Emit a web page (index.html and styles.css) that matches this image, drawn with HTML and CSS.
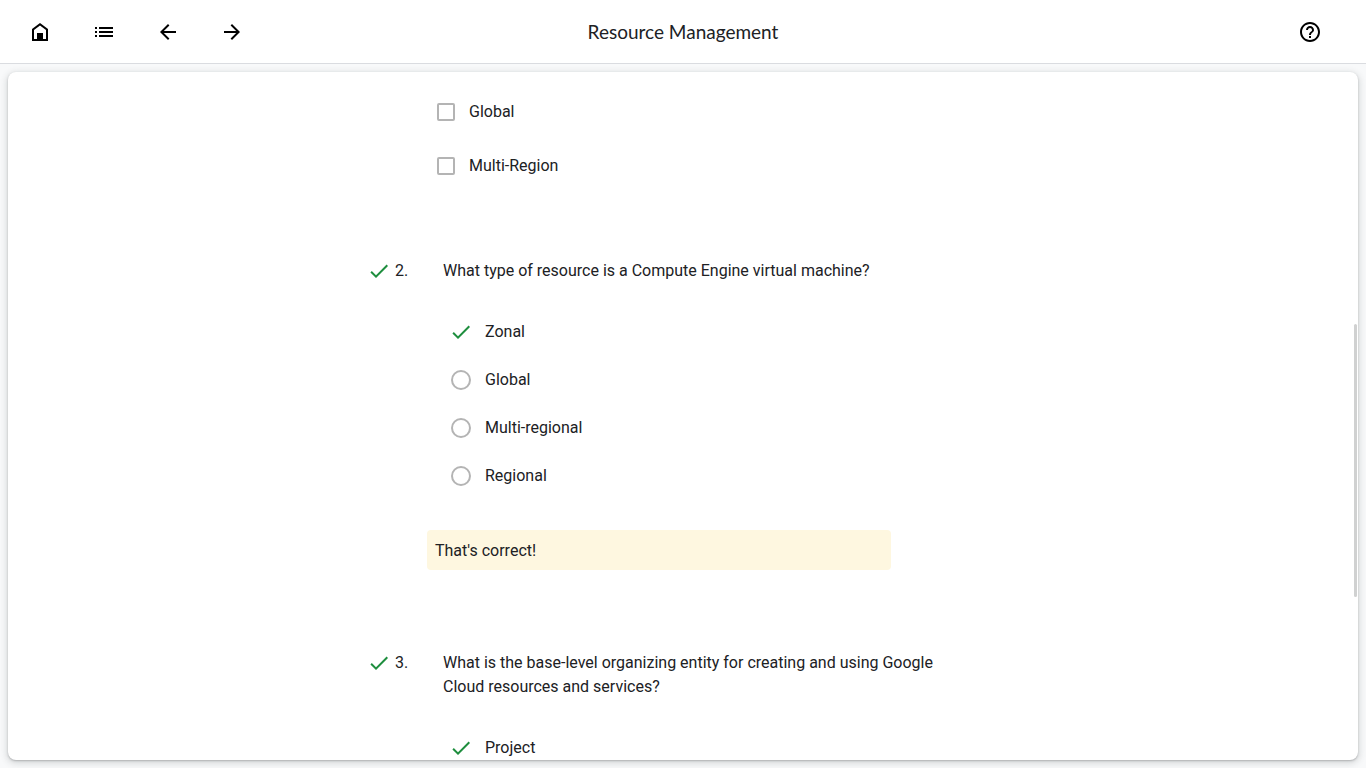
FILE: index.html
```html
<!DOCTYPE html>
<html lang="en">
<head>
<meta charset="utf-8">
<title>Resource Management</title>
<link rel="stylesheet" href="styles.css">
</head>
<body>
<svg class="defs" aria-hidden="true">
  <symbol id="check" viewBox="0 0 24 24"><path d="M9 16.170 4.830 12l-1.420 1.410L9 19 21 7l-1.410-1.410z"/></symbol>
</svg>
<header class="topbar">
  <nav class="tools" aria-label="Course">
    <button class="icon-button" type="button" aria-label="Home"><svg viewBox="0 0 24 24"><path d="M6 19h3v-6h6v6h3v-9l-6-4.500L6 10v9zm-2 2V9l8-6 8 6v12z"/><path d="M9 13h6v7H9z"/></svg></button>
    <button class="icon-button" type="button" aria-label="Outline"><svg viewBox="0 0 24 24"><path d="M3 7h2v2H3zM7 7h14v2H7zM3 11h2v2H3zM7 11h14v2H7zM3 15h2v2H3zM7 15h14v2H7z"/></svg></button>
    <button class="icon-button" type="button" aria-label="Previous"><svg viewBox="0 0 24 24"><path d="M20 11H7.830l5.590-5.590L12 4l-8 8 8 8 1.410-1.410L7.830 13H20z"/></svg></button>
    <button class="icon-button" type="button" aria-label="Next"><svg viewBox="0 0 24 24"><path d="m12 4-1.410 1.410L16.170 11H4v2h12.170l-5.580 5.590L12 20l8-8z"/></svg></button>
  </nav>
  <h1 class="title">Resource Management</h1>
  <div class="help">
    <button class="icon-button" type="button" aria-label="Help"><svg viewBox="0 0 24 24"><path d="M11 18h2v-2h-2v2zm1-16C6.480 2 2 6.480 2 12s4.480 10 10 10 10-4.480 10-10S17.520 2 12 2zm0 18c-4.410 0-8-3.590-8-8s3.590-8 8-8 8 3.590 8 8-3.590 8-8 8zm0-14c-2.210 0-4 1.790-4 4h2c0-1.100.9-2 2-2s2 .9 2 2c0 2-3 1.750-3 5h2c0-2.250 3-2.500 3-5 0-2.210-1.790-4-4-4z"/></svg></button>
  </div>
</header>
<main class="card">
  <form class="quiz">
    <div class="checkboxes">
      <label class="check-row"><input class="box" type="checkbox">Global</label>
      <label class="check-row"><input class="box" type="checkbox">Multi-Region</label>
    </div>
    <section class="question">
      <div class="prompt">
        <svg class="mark"><use href="#check"/></svg>
        <span class="number">2.</span>
        <p class="text">What type of resource is a Compute Engine virtual machine?</p>
      </div>
      <div class="options">
        <label class="option"><span class="control"><input class="radio" type="radio" name="q2" checked><svg class="tick"><use href="#check"/></svg></span>Zonal</label>
        <label class="option"><span class="control"><input class="radio" type="radio" name="q2"></span>Global</label>
        <label class="option"><span class="control"><input class="radio" type="radio" name="q2"></span>Multi-regional</label>
        <label class="option"><span class="control"><input class="radio" type="radio" name="q2"></span>Regional</label>
      </div>
      <p class="feedback">That's correct!</p>
    </section>
    <section class="question">
      <div class="prompt">
        <svg class="mark"><use href="#check"/></svg>
        <span class="number">3.</span>
        <p class="text">What is the base-level organizing entity for creating and using Google Cloud resources and services?</p>
      </div>
      <div class="options">
        <label class="option"><span class="control"><input class="radio" type="radio" name="q3" checked><svg class="tick"><use href="#check"/></svg></span>Project</label>
      </div>
    </section>
  </form>
  <div class="thumb"></div>
</main>
</body>
</html>
```
FILE: styles.css
```css
* { box-sizing: border-box; }

body {
  display: flex;
  flex-direction: column;
  height: 100vh;
  margin: 0;
  overflow: hidden;
  background: #f8f9fa;
  color: #202124;
  font: 16px/24px Roboto, sans-serif;
}

h1, p { margin: 0; }

.defs { display: none; }

.topbar {
  display: grid;
  grid-template-columns: 1fr auto 1fr;
  align-items: center;
  flex: none;
  height: 64px;
  padding: 0 32px 0 16px;
  background: #fff;
  border-bottom: 1px solid #dadce0;
}

.tools { display: flex; gap: 16px; }

.icon-button {
  display: grid;
  place-items: center;
  width: 48px;
  height: 48px;
  padding: 0;
  border: 0;
  background: none;
}

.icon-button svg { width: 24px; height: 24px; }

.title {
  margin-left: 16px;
  font: 400 19px/24px Lato, sans-serif;
}

.help { justify-self: end; }

.card {
  position: relative;
  flex: 1;
  min-height: 0;
  margin: 8px;
  overflow: hidden;
  background: #fff;
  border-radius: 8px;
  box-shadow: 0 1px 2px rgba(60, 64, 67, .3), 0 2px 6px 2px rgba(60, 64, 67, .15);
}

.quiz {
  max-width: 632px;
  margin: 0 auto;
  padding-top: 13px;
}

.checkboxes { padding-left: 70px; }

.check-row {
  display: flex;
  align-items: center;
  gap: 14px;
  height: 54px;
}

.box {
  appearance: none;
  width: 18px;
  height: 18px;
  margin: 0;
  border: 2px solid #b4b4b4;
  border-radius: 2px;
}

.question { padding-top: 81px; }

.checkboxes + .question { padding-top: 66px; }

.prompt { display: flex; }

.mark, .tick {
  flex: none;
  width: 24px;
  height: 24px;
  fill: #1e8e3e;
}

.mark { margin-right: 4px; }

.number { flex: none; width: 48px; }

.text { max-width: 512px; }

.options { padding: 25px 0 0 84px; }

.option {
  display: flex;
  align-items: center;
  gap: 14px;
  height: 48px;
}

.control {
  position: relative;
  display: flex;
  width: 20px;
  height: 20px;
}

.radio {
  appearance: none;
  width: 20px;
  height: 20px;
  margin: 0;
  border: 2px solid #b4b4b4;
  border-radius: 50%;
}

.radio:checked { opacity: 0; }

.tick { position: absolute; inset: -2px; }

.feedback {
  width: 464px;
  margin: 30px 0 0 60px;
  padding: 9px 8px 7px;
  background: #fef7e0;
  border-radius: 4px;
}

.thumb {
  position: absolute;
  top: 252px;
  right: 1px;
  width: 3px;
  height: 273px;
  background: #d0d1d1;
  border-radius: 2px;
}
```
